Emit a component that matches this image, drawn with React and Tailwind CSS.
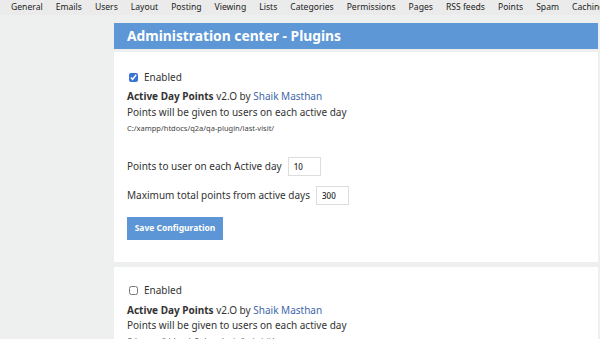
import React from "react";

const navItems = ["General","Emails","Users","Layout","Posting","Viewing","Lists","Categories","Permissions","Pages","RSS feeds","Points","Spam","Caching"];

function PluginBody({ checked }) {
  return (
    <div className={`bg-white pl-[13px] pb-[22px] ${checked ? "pt-[17px]" : "pt-[15px]"}`}>
      <label className="flex items-center h-[16px] text-[10px] text-[#333]">
        <input type="checkbox" defaultChecked={checked} className="w-[9px] h-[9px] ml-[2px] mr-[6px] accent-[#3b73d4]" />
        Enabled
      </label>
      <div className={`leading-[16px] text-[10px] text-[#333] ${checked ? "mt-[3px]" : "mt-[4px]"}`}>
        <span className="font-bold">Active Day Points</span> v2.O by <span className="text-[#3e67aa]">Shaik Masthan</span>
      </div>
      <div className={`text-[10px] text-[#333] ${checked ? "leading-[16px]" : "leading-[14px]"}`}>Points will be given to users on each active day</div>
      <div className="mt-[1px] leading-[14px] text-[7.5px] text-[#444]">C:/xampp/htdocs/q2a/qa-plugin/last-visit/</div>
      {checked && (
        <>
          <div className="mt-[22px] flex items-center h-[19px] text-[10px] text-[#333]">
            <span>Points to user on each Active day</span>
            <div className="ml-[6px] w-[33px] h-[19px] border border-[#ddd] bg-white pl-[5px] flex items-center text-[8px] text-[#222] font-medium">10</div>
          </div>
          <div className="mt-[10px] flex items-center h-[19px] text-[10px] text-[#333]">
            <span>Maximum total points from active days</span>
            <div className="ml-[6px] w-[33px] h-[19px] border border-[#ddd] bg-white pl-[5px] flex items-center text-[8px] text-[#222] font-medium">300</div>
          </div>
          <div className="mt-[12px] w-[96px] h-[23px] bg-[#5d96d6] flex items-center justify-center text-white font-bold text-[8.5px]">Save Configuration</div>
        </>
      )}
    </div>
  );
}

export default function App() {
  return (
    <div className="w-[600px] h-[339px] overflow-hidden bg-[#eef0f0]" style={{ fontFamily: '"Noto Sans", "Open Sans", sans-serif' }}>
      <div className="h-[15px] bg-[#ebebeb] flex items-center pl-[11px] gap-[13px] text-[8.6px] text-[#222] whitespace-nowrap overflow-hidden">
        {navItems.map((n) => (<span key={n}>{n}</span>))}
      </div>
      <div className="pl-[114px] pr-[2px] pt-[8px]">
        <div className="h-[26px] bg-[#5d97d6] flex items-center pl-[13px] text-white font-bold text-[13.8px]">Administration center - Plugins</div>
        <div className="mt-[3px]">
          <PluginBody checked={true} />
        </div>
        <div className="mt-[5px]">
          <PluginBody checked={false} />
        </div>
      </div>
    </div>
  );
}
